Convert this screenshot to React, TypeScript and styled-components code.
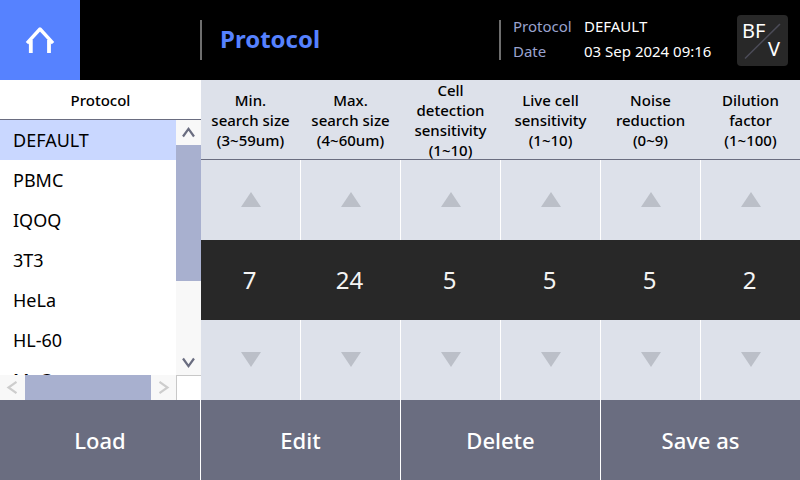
import React, { useId, useState } from "react";
import styled, { createGlobalStyle } from "styled-components";

const GlobalStyle = createGlobalStyle`
  * { box-sizing: border-box; }
  body { margin: 0; background: #000; font-family: "Noto Sans", sans-serif; }
  button, input { font: inherit; color: inherit; border: 0; padding: 0; margin: 0; background: none; border-radius: 0; }
  button { cursor: pointer; }
`;

const Screen = styled.div`
  display: flex;
  flex-direction: column;
  min-height: 100vh;
`;

const TopBar = styled.header`
  display: grid;
  grid-template-columns: 200px minmax(0, 1fr) 301px;
  align-items: center;
  height: 80px;
  background: #000;
`;

const HomeButton = styled.button`
  display: grid;
  place-items: center;
  width: 80px;
  height: 80px;
  background: #5682ff;
`;

const Title = styled.h1`
  height: 40px;
  margin: 0;
  padding-left: 18px;
  border-left: 2px solid #6e6e6e;
  font-size: 24px;
  font-weight: 700;
  line-height: 38px;
  color: #5682ff;
`;

const Status = styled.div`
  display: flex;
  align-items: center;
  justify-content: space-between;
  height: 80px;
  padding-right: 12px;
`;

const Details = styled.dl`
  display: grid;
  grid-template-columns: 71px auto;
  align-content: center;
  height: 40px;
  margin: 0;
  padding: 0 0 2px 12px;
  border-left: 2px solid #6e6e6e;
  font-size: 15px;
  line-height: 25px;
  white-space: nowrap;
`;

const Term = styled.dt`
  color: #9aa3cf;
`;

const Detail = styled.dd`
  margin: 0;
  color: #fff;
`;

const ModeButton = styled.button`
  display: grid;
  position: relative;
  width: 51px;
  height: 51px;
  padding: 7px 8px 7px 5px;
  border-radius: 4px;
  background: #282828;
  color: #fff;
  font-size: 20px;
  line-height: 18px;
`;

const ModeSlash = styled.svg`
  position: absolute;
  inset: 0;
`;

const ModeName = styled.span<{ $second?: boolean }>`
  text-align: ${(p) => (p.$second ? "right" : "left")};
`;

const Main = styled.main`
  display: grid;
  grid-template-columns: 201px minmax(0, 1fr);
  flex: 1;
  min-height: 320px;
`;

const ProtocolPane = styled.section`
  display: grid;
  grid-template-columns: minmax(0, 1fr) 25px;
  grid-template-rows: 40px minmax(0, 1fr) 25px;
  background: #fff;
`;

const PaneTitle = styled.h2`
  grid-column: 1 / -1;
  margin: 0;
  border-bottom: 1px solid #6a6d80;
  font-size: 15px;
  font-weight: 500;
  line-height: 40px;
  text-align: center;
`;

const List = styled.ul`
  height: 0;
  min-height: 100%;
  margin: 0;
  padding: 0;
  list-style: none;
  overflow: hidden;
`;

const ListItem = styled.button<{ $selected: boolean }>`
  display: block;
  width: 100%;
  padding-left: 13px;
  background: ${(p) => (p.$selected ? "#c9d7ff" : "#fff")};
  font-size: 18px;
  line-height: 40px;
  text-align: left;
`;

const ScrollBar = styled.div<{ $horizontal?: boolean }>`
  display: flex;
  flex-direction: ${(p) => (p.$horizontal ? "row" : "column")};
  background: #f8f8f8;
`;

const ScrollButton = styled.button`
  display: grid;
  place-items: center;
  flex: none;
  width: 25px;
  height: 25px;
`;

const ScrollTrack = styled.div<{ $horizontal?: boolean }>`
  display: flex;
  flex-direction: ${(p) => (p.$horizontal ? "row" : "column")};
  flex: 1;
`;

const ScrollThumb = styled.div<{ $share: number }>`
  flex: 0 0 ${(p) => p.$share}%;
  background: #a8b0cf;
`;

const ScrollCorner = styled.div`
  border-top: 1px solid #c8c8c8;
  border-left: 1px solid #c8c8c8;
`;

const Settings = styled.section`
  display: grid;
  grid-template-rows: 80px repeat(3, minmax(80px, 1fr));
`;

const SettingsRow = styled.div<{ $kind: "label" | "step" | "value" }>`
  display: grid;
  grid-template-columns: repeat(6, minmax(0, 1fr));
  column-gap: 1px;
  background: ${(p) => ({ label: "#dde1ea", step: "#fff", value: "#282828" })[p.$kind]};
  border-bottom: ${(p) => (p.$kind === "label" ? "1px solid #6a6d80" : "0")};
`;

const SettingLabel = styled.label`
  display: flex;
  flex-direction: column;
  justify-content: center;
  font-size: 15px;
  font-weight: 500;
  line-height: 20px;
  text-align: center;
  white-space: nowrap;
`;

const StepButton = styled.button`
  display: grid;
  place-items: center;
  padding: 0 0 1px 1px;
  background: #dde1ea;
`;

const ValueInput = styled.input`
  width: 100%;
  padding: 0 2px 2px 0;
  color: #f4f4f4;
  font-size: 24px;
  text-align: center;
`;

const Actions = styled.footer`
  display: grid;
  grid-template-columns: repeat(4, minmax(0, 1fr));
  height: 80px;
`;

const ActionButton = styled.button`
  background: #6a6d80;
  color: #fff;
  font-size: 22px;
  font-weight: 500;
  & + & { border-left: 1px solid #fff; }
`;

const protocols = ["DEFAULT", "PBMC", "IQOQ", "3T3", "HeLa", "HL-60", "MeC"];

const settings = [
  { lines: ["Min.", "search size", "(3~59um)"], value: 7, min: 3, max: 59 },
  { lines: ["Max.", "search size", "(4~60um)"], value: 24, min: 4, max: 60 },
  { lines: ["Cell", "detection", "sensitivity", "(1~10)"], value: 5, min: 1, max: 10 },
  { lines: ["Live cell", "sensitivity", "(1~10)"], value: 5, min: 1, max: 10 },
  { lines: ["Noise", "reduction", "(0~9)"], value: 5, min: 0, max: 9 },
  { lines: ["Dilution", "factor", "(1~100)"], value: 2, min: 1, max: 100 },
];

const chevrons = {
  up: "M7 16.5 L12.5 8.8 L18 16.5",
  down: "M7 8.5 L12.5 16.2 L18 8.5",
  left: "M16.5 6.8 L8.5 12.5 L16.5 18.2",
  right: "M8.5 6.8 L16.5 12.5 L8.5 18.2",
};

function Chevron({ to, color }: { to: keyof typeof chevrons; color: string }) {
  return (
    <svg width="25" height="25" viewBox="0 0 25 25" aria-hidden="true">
      <path d={chevrons[to]} fill="none" stroke={color} strokeWidth="2.2" />
    </svg>
  );
}

function Triangle({ down }: { down?: boolean }) {
  return (
    <svg width="20" height="15" viewBox="0 0 20 15" aria-hidden="true">
      <path d={down ? "M0 0H20L10 15Z" : "M0 15H20L10 0Z"} fill="#bbbfc8" />
    </svg>
  );
}

export default function App() {
  const id = useId();
  const [selected, setSelected] = useState("DEFAULT");
  const [values, setValues] = useState(settings.map((s) => s.value));

  const change = (index: number, next: number) => {
    const { min, max } = settings[index];
    if (next >= min && next <= max) {
      setValues(values.map((v, i) => (i === index ? next : v)));
    }
  };

  return (
    <Screen>
      <GlobalStyle />
      <TopBar>
        <HomeButton aria-label="Home">
          <svg width="30" height="30" viewBox="0 0 30 30" aria-hidden="true">
            <path
              d="M2 18.2 L15 4 L28 18.2"
              fill="none"
              stroke="#fff"
              strokeWidth="3.4"
              strokeLinejoin="round"
            />
            <path d="M5.8 15 V28 M24 15 V28" stroke="#fff" strokeWidth="3.8" />
          </svg>
        </HomeButton>
        <Title>Protocol</Title>
        <Status>
          <Details>
            <Term>Protocol</Term>
            <Detail>{selected}</Detail>
            <Term>Date</Term>
            <Detail>03 Sep 2024 09:16</Detail>
          </Details>
          <ModeButton>
            <ModeSlash width="51" height="51" viewBox="0 0 51 51" aria-hidden="true">
              <path d="M8 43.5 L43 9" stroke="#4c4c58" strokeWidth="1.5" />
            </ModeSlash>
            <ModeName>BF</ModeName>
            <ModeName $second>V</ModeName>
          </ModeButton>
        </Status>
      </TopBar>

      <Main>
        <ProtocolPane>
          <PaneTitle>Protocol</PaneTitle>
          <List>
            {protocols.map((name) => (
              <li key={name}>
                <ListItem
                  $selected={name === selected}
                  aria-pressed={name === selected}
                  onClick={() => setSelected(name)}
                >
                  {name}
                </ListItem>
              </li>
            ))}
          </List>
          <ScrollBar>
            <ScrollButton aria-label="Scroll up">
              <Chevron to="up" color="#6a6d80" />
            </ScrollButton>
            <ScrollTrack>
              <ScrollThumb $share={66.5} />
            </ScrollTrack>
            <ScrollButton aria-label="Scroll down">
              <Chevron to="down" color="#6a6d80" />
            </ScrollButton>
          </ScrollBar>
          <ScrollBar $horizontal>
            <ScrollButton aria-label="Scroll left">
              <Chevron to="left" color="#cdcdcd" />
            </ScrollButton>
            <ScrollTrack $horizontal>
              <ScrollThumb $share={100} />
            </ScrollTrack>
            <ScrollButton aria-label="Scroll right">
              <Chevron to="right" color="#cdcdcd" />
            </ScrollButton>
          </ScrollBar>
          <ScrollCorner />
        </ProtocolPane>

        <Settings>
          <SettingsRow $kind="label">
            {settings.map((s, i) => (
              <SettingLabel key={i} htmlFor={`${id}-${i}`}>
                {s.lines.map((line) => (
                  <span key={line}>{line}</span>
                ))}
              </SettingLabel>
            ))}
          </SettingsRow>
          <SettingsRow $kind="step">
            {settings.map((s, i) => (
              <StepButton
                key={i}
                aria-label={`Increase ${s.lines.join(" ")}`}
                onClick={() => change(i, values[i] + 1)}
              >
                <Triangle />
              </StepButton>
            ))}
          </SettingsRow>
          <SettingsRow $kind="value">
            {settings.map((_, i) => (
              <ValueInput
                key={i}
                id={`${id}-${i}`}
                inputMode="numeric"
                value={values[i]}
                onChange={(e) => change(i, Number(e.target.value))}
              />
            ))}
          </SettingsRow>
          <SettingsRow $kind="step">
            {settings.map((s, i) => (
              <StepButton
                key={i}
                aria-label={`Decrease ${s.lines.join(" ")}`}
                onClick={() => change(i, values[i] - 1)}
              >
                <Triangle down />
              </StepButton>
            ))}
          </SettingsRow>
        </Settings>
      </Main>

      <Actions>
        <ActionButton>Load</ActionButton>
        <ActionButton>Edit</ActionButton>
        <ActionButton>Delete</ActionButton>
        <ActionButton>Save as</ActionButton>
      </Actions>
    </Screen>
  );
}
